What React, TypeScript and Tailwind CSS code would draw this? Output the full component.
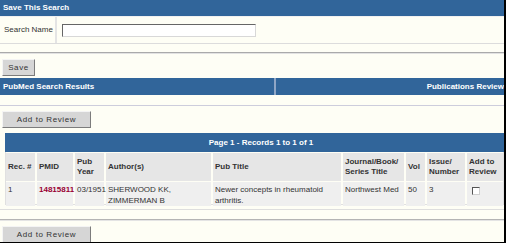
const FONT = { fontFamily: '"Liberation Sans", Arial, sans-serif' };

const COLS = "grid grid-cols-[29px_36px_29px_105px_128px_61px_19px_38px_36px] gap-x-[2px]";

function Btn({ label, width }: { label: string; width: string }) {
  return (
    <button
      className={`${width} flex h-[17px] items-center justify-center border border-t-[#f4f4f4] border-l-[#f4f4f4] border-r-[#7c7c7c] border-b-[#7c7c7c] bg-[#d6d6d6] text-[8px] leading-none tracking-[0.6px] text-[#333]`}
    >
      {label}
    </button>
  );
}

function HeadCell({ children }: { children: React.ReactNode }) {
  return (
    <div className="flex items-center bg-[#e6e6e6] pl-[2px] text-[8px] font-bold leading-[10px] text-[#333]">
      {children}
    </div>
  );
}

function DataCell({ children }: { children?: React.ReactNode }) {
  return (
    <div className="bg-[#efefef] pl-[2px] pt-[2px] text-[8px] leading-[11px] text-[#333]">
      {children}
    </div>
  );
}

export default function App() {
  return (
    <div
      style={FONT}
      className="flex h-[243px] w-[506px] flex-col overflow-hidden border-r-2 border-b border-black bg-[#fefef5]"
    >
      <div className="flex h-[17px] shrink-0 items-center border-b border-[#f0f0f0] bg-[#31659a] pl-[3px] text-[8px] font-bold text-white">
        Save This Search
      </div>

      <div className="flex h-[27px] shrink-0 border-b border-[#dcdcdc]">
        <div className="flex w-[57px] items-center border-r-2 border-[#e4e4e4] pl-[4px] text-[8px] text-[#333]">
          Search Name
        </div>
        <div className="flex items-center pl-[5px]">
          <input className="block h-[13px] w-[194px] border border-t-[#666] border-l-[#666] border-r-[#d8d8d8] border-b-[#d8d8d8] bg-white outline-none" />
        </div>
      </div>

      <div className="mt-[8px] h-[2px] shrink-0 border-t border-b border-t-[#aaaaaa] border-b-[#e2e2e2]" />

      <div className="mt-[5px] flex shrink-0 pl-[2px]">
        <Btn label="Save" width="w-[33px]" />
      </div>

      <div className="mt-[2px] flex h-[17px] shrink-0 bg-[#31659a] text-[8px] font-bold text-white">
        <div className="flex w-[274px] items-center pl-[3px]">PubMed Search Results</div>
        <div className="w-[2px] bg-[#8fa6c6]" />
        <div className="flex flex-1 items-center justify-end">Publications Review</div>
      </div>

      <div className="mt-[10px] h-[1px] shrink-0 bg-[#cdcddc]" />

      <div className="mt-[5px] flex shrink-0 pl-[2px]">
        <Btn label="Add to Review" width="w-[89px]" />
      </div>

      <div className="mt-[5px] ml-[5px] w-[499px] shrink-0 border-x border-b border-[#e0e0e0] pb-[1px]">
        <div className="-mx-px flex h-[19px] items-center justify-center bg-[#31659a] pl-[13px] text-[8px] font-bold text-white">
          Page 1 - Records 1 to 1 of 1
        </div>
        <div className={`${COLS} mt-[1px] h-[28px]`}>
          <HeadCell>Rec. #</HeadCell>
          <HeadCell>PMID</HeadCell>
          <HeadCell>
            Pub
            <br />
            Year
          </HeadCell>
          <HeadCell>Author(s)</HeadCell>
          <HeadCell>Pub Title</HeadCell>
          <HeadCell>
            Journal/Book/
            <br />
            Series Title
          </HeadCell>
          <HeadCell>Vol</HeadCell>
          <HeadCell>
            Issue/
            <br />
            Number
          </HeadCell>
          <HeadCell>
            Add to
            <br />
            Review
          </HeadCell>
        </div>
        <div className={`${COLS} mt-[1px] h-[21px]`}>
          <DataCell>1</DataCell>
          <DataCell>
            <span className="font-bold text-[#990033]">14815811</span>
          </DataCell>
          <DataCell>03/1951</DataCell>
          <DataCell>
            SHERWOOD KK,
            <br />
            ZIMMERMAN B
          </DataCell>
          <DataCell>
            Newer concepts in rheumatoid
            <br />
            arthritis.
          </DataCell>
          <DataCell>Northwest Med</DataCell>
          <DataCell>50</DataCell>
          <DataCell>3</DataCell>
          <div className="bg-[#efefef] pl-[5px] pt-[5px]">
            <div className="h-[8px] w-[8px] border border-t-[#555] border-l-[#555] border-r-[#cfcfcf] border-b-[#cfcfcf] bg-white" />
          </div>
        </div>
      </div>

      <div className="mt-[4px] h-[1px] shrink-0 bg-[#dedede]" />

      <div className="mt-[9px] h-[2px] shrink-0 border-t border-b border-t-[#b4b4b4] border-b-[#e4e4e4]" />

      <div className="mt-[5px] flex shrink-0 pl-[2px]">
        <Btn label="Add to Review" width="w-[89px]" />
      </div>
    </div>
  );
}
